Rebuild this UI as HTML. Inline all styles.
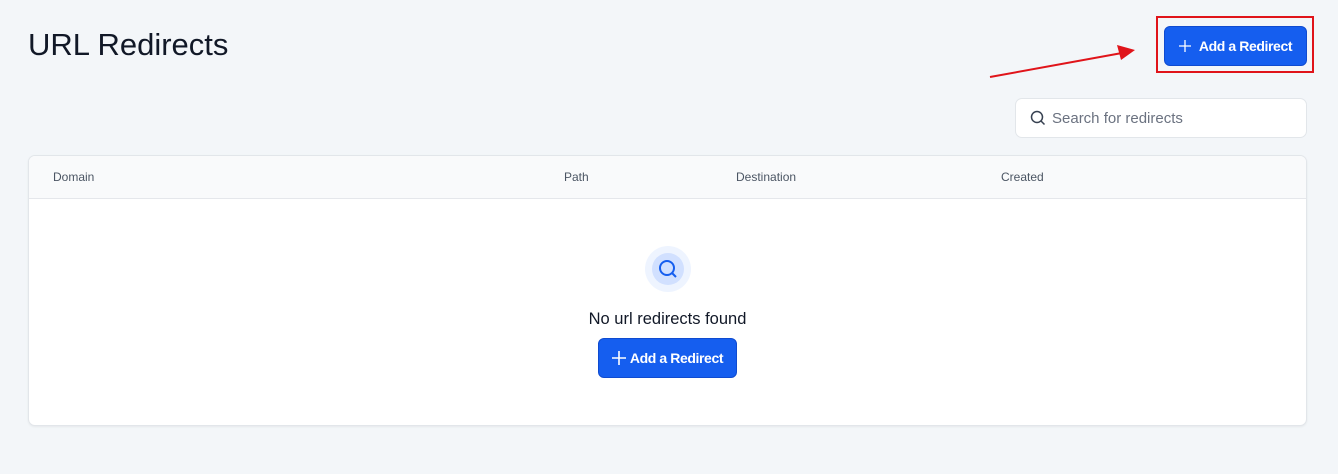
<!DOCTYPE html>
<html><head><style>
*{box-sizing:border-box;margin:0;padding:0}
body{width:1338px;height:474px;background:#f3f6f9;font-family:"Liberation Sans",sans-serif;position:relative;overflow:hidden;color:#111827}
h1{position:absolute;left:28px;top:27px;font-size:31px;font-weight:400;color:#111827}
.btn{position:absolute;background:#155eef;color:#fff;font-weight:700;font-size:14px;letter-spacing:-0.4px;border-radius:6px;display:flex;align-items:center;justify-content:center;gap:6px;border:1px solid #0f4bd0}
.redbox{position:absolute;left:1156px;top:16px;width:158px;height:57px;border:2px solid #e0141a}
.search{position:absolute;left:1015px;top:98px;width:292px;height:40px;background:#fff;border:1px solid #e2e6ea;border-radius:7px;display:flex;align-items:center;padding-left:14px;gap:6px;color:#6b7280;font-size:15px}
.card{position:absolute;left:28px;top:155px;width:1279px;height:271px;background:#fff;border:1px solid #e2e6ea;border-radius:7px;box-shadow:0 1px 2px rgba(0,0,0,.06);overflow:hidden}
.thead{height:43px;background:#f9fafb;border-bottom:1px solid #e5e7eb;position:relative;font-size:12px;color:#4b5563}
.thead span{position:absolute;top:14px}
</style></head><body>
<h1>URL Redirects</h1>
<svg style="position:absolute;left:0;top:0" width="1338" height="100"><line x1="990" y1="77" x2="1122" y2="53" stroke="#e0141a" stroke-width="2"/><polygon points="1135,50 1117,45 1121,60" fill="#e0141a"/></svg>
<div class="redbox"></div>
<div class="btn" style="left:1164px;top:26px;width:143px;height:40px;gap:8px"><svg width="12" height="12" viewBox="0 0 12 12"><path d="M6 0V12M0 6H12" stroke="#fff" stroke-width="1.3"/></svg>Add a Redirect</div>
<div class="search"><svg width="16" height="16" viewBox="0 0 16 16"><circle cx="7" cy="7" r="5.5" fill="none" stroke="#374151" stroke-width="1.5"/><line x1="11" y1="11" x2="14.5" y2="14.5" stroke="#374151" stroke-width="1.5"/></svg>Search for redirects</div>
<div class="card">
<div class="thead"><span style="left:24px">Domain</span><span style="left:535px">Path</span><span style="left:707px">Destination</span><span style="left:972px">Created</span></div>
<div style="position:absolute;left:616px;top:90px;width:46px;height:46px;border-radius:50%;background:#eef4ff;display:flex;align-items:center;justify-content:center"><div style="width:32px;height:32px;border-radius:50%;background:#d1e0ff;display:flex;align-items:center;justify-content:center"><svg width="22" height="22" viewBox="0 0 22 22"><circle cx="10" cy="10" r="7" fill="none" stroke="#155eef" stroke-width="2"/><line x1="15" y1="15" x2="19" y2="19" stroke="#155eef" stroke-width="2"/></svg></div></div>
<div style="position:absolute;left:0;width:100%;top:154px;text-align:center;font-size:16.5px;color:#111827">No url redirects found</div>
</div>
<div class="btn" style="left:598px;top:338px;width:139px;height:40px;gap:4px"><svg width="14" height="14" viewBox="0 0 14 14"><path d="M7 0V14M0 7H14" stroke="#fff" stroke-width="1.6"/></svg>Add a Redirect</div>
</body></html>
